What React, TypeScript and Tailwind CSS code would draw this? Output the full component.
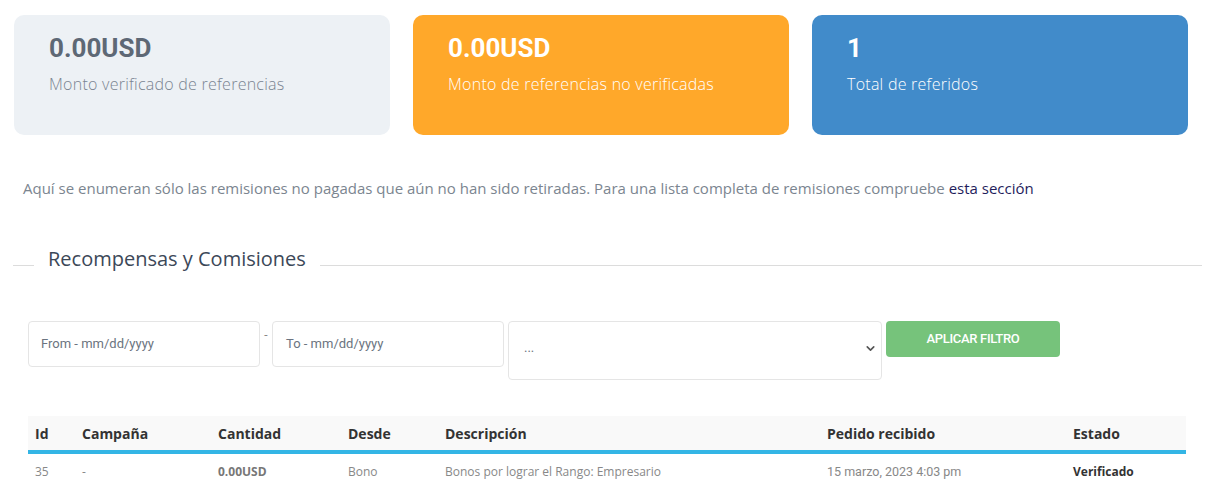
import { ChevronDown } from 'lucide-react';

const cards = [
  { value: '0.00USD', label: 'Monto verificado de referencias', box: 'bg-[#edf1f5]', num: 'text-[#5e6875]', text: 'text-[#7a8491]' },
  { value: '0.00USD', label: 'Monto de referencias no verificadas', box: 'bg-[#ffa82a]', num: 'text-white', text: 'text-white' },
  { value: '1', label: 'Total de referidos', box: 'bg-[#418bca]', num: 'text-white', text: 'text-white' },
];

const cols = [
  { name: 'Id', w: 'w-[47px]' },
  { name: 'Campaña', w: 'w-[136px]' },
  { name: 'Cantidad', w: 'w-[130px]' },
  { name: 'Desde', w: 'w-[97px]' },
  { name: 'Descripción', w: 'w-[382px]' },
  { name: 'Pedido recibido', w: 'w-[246px]' },
  { name: 'Estado', w: 'w-[120px]' },
];

export default function App() {
  return (
    <div className="bg-white min-h-[489px] w-[1207px] overflow-hidden font-['Open_Sans',sans-serif]">
      <div className="grid grid-cols-3 gap-[23px] pl-[14px] pr-[19px] pt-[15px]">
        {cards.map((c, i) => (
          <div key={i} className={`${c.box} h-[120px] rounded-[10px] pl-[35px] pt-[18px]`}>
            <div className={`${c.num} font-['Roboto',sans-serif] font-bold text-[26px] leading-[30px]`}>{c.value}</div>
            <div className={`${c.text} text-[16px] font-light tracking-[0.25px] leading-[22px] mt-[10px]`}>{c.label}</div>
          </div>
        ))}
      </div>

      <p className="pl-[23px] mt-[42px] text-[15px] leading-[22px] text-[#7b8590]">
        Aquí se enumeran sólo las remisiones no pagadas que aún no han sido retiradas. Para una lista completa de remisiones compruebe{' '}
        <a className="text-[#1f1d5c]">esta sección</a>
      </p>

      <div className="relative ml-[13px] mr-[5px] mt-[48px] h-[24px] flex items-center">
        <div className="absolute left-0 right-0 top-[18px] border-t border-[#dcdcdc]" />
        <h2 className="relative ml-[21px] bg-white px-[14px] text-[20px] leading-[24px] text-[#3c4858]">Recompensas y Comisiones</h2>
      </div>

      <div className="flex items-start pl-[28px] mt-[50px] font-['Roboto',sans-serif]">
        <div className="w-[232px] h-[46px] border border-[#e5e5e5] rounded-[4px] flex items-center pl-[12px] text-[13px] text-[#6b7480]">
          From - mm/dd/yyyy
        </div>
        <span className="w-[12px] text-center text-[#888] text-[12px] leading-[28px]">-</span>
        <div className="w-[232px] h-[46px] border border-[#e5e5e5] rounded-[4px] flex items-center pl-[13px] text-[13px] text-[#6b7480]">
          To - mm/dd/yyyy
        </div>
        <div className="ml-[4px] w-[374px] h-[59px] border border-[#e5e5e5] rounded-[4px] flex items-center justify-between pl-[15px] pr-[4px] text-[13px] text-[#6b7480]">
          <span className="leading-none -mt-[6px]">...</span>
          <ChevronDown size={13} strokeWidth={3} className="text-[#555] -mt-[4px]" />
        </div>
        <button className="ml-[4px] w-[174px] h-[36px] rounded-[4px] bg-[#76c37b] text-white text-[13px] font-medium tracking-tight">
          APLICAR FILTRO
        </button>
      </div>

      <table className="ml-[28px] mt-[36px] table-fixed border-collapse w-[1158px]">
        <thead>
          <tr className="bg-[#f9f9f9] border-b-4 border-[#33b5e5]">
            {cols.map((c) => (
              <th key={c.name} className={`${c.w} h-[36px] pl-[7px] text-left text-[14px] font-bold text-[#333]`}>
                {c.name}
              </th>
            ))}
          </tr>
        </thead>
        <tbody>
          <tr className="text-[12px] text-[#888] h-[38px]">
            <td className="pl-[7px]">35</td>
            <td className="pl-[7px]">-</td>
            <td className="pl-[7px] font-bold text-[#777]">0.00USD</td>
            <td className="pl-[7px]">Bono</td>
            <td className="pl-[7px]">Bonos por lograr el Rango: Empresario</td>
            <td className="pl-[7px] font-['Roboto',sans-serif] text-[12.5px] text-[#888]">15 marzo, 2023 4:03 pm</td>
            <td className="pl-[7px] font-bold text-[#333]">Verificado</td>
          </tr>
        </tbody>
      </table>
    </div>
  );
}
